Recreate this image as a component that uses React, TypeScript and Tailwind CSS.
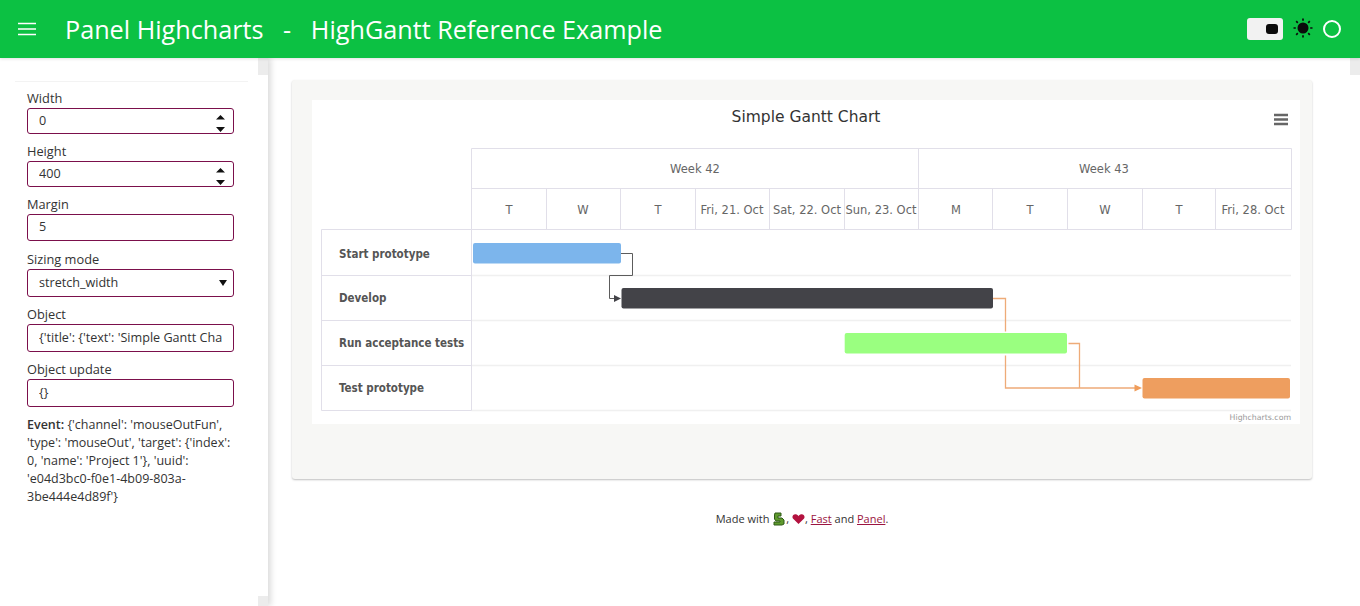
import React from "react";

const UI = "font-['Open_Sans',sans-serif]";
const CF = "'DejaVu Sans', Verdana, sans-serif";
const inputCls =
  "block w-full h-full rounded-[3px] border border-[#7b0f4b] bg-white pl-[11px] pr-[11px] pb-[2px] text-[12.6px] text-[#333] outline-none";

function Spin() {
  return (
    <svg className="absolute right-[7px] top-[5px]" width="12" height="20" viewBox="0 0 12 20">
      <path d="M1 6.5 L5.5 2 L10 6.5 Z M1 14 L10 14 L5.5 19 Z" fill="#111" />
    </svg>
  );
}

function Field({ label, value, h, spin, select }: { label: string; value: string; h: string; spin?: boolean; select?: boolean }) {
  return (
    <div className="flex flex-col">
      <label className="h-[20px] text-[12.8px] leading-[20px] text-[#333]">{label}</label>
      <div className={`relative ${h}`}>
        <input readOnly value={value} className={`${inputCls} ${UI}`} />
        {spin && <Spin />}
        {select && (
          <svg className="absolute right-[7px] top-[11px]" width="8" height="6" viewBox="0 0 8 6">
            <path d="M0 0 L8 0 L4 6 Z" fill="#111" />
          </svg>
        )}
      </div>
    </div>
  );
}

const vLines = [546.5, 620.5, 695.5, 769.5, 844.5, 918.5, 992.5, 1067.5, 1142.5, 1215.5];
const dayLabels: [number, string][] = [
  [509, "T"], [583, "W"], [658, "T"], [732, "Fri, 21. Oct"], [807, "Sat, 22. Oct"], [881, "Sun, 23. Oct"],
  [956, "M"], [1030, "T"], [1105, "W"], [1179, "T"], [1253, "Fri, 28. Oct"],
];
const rows: [number, string][] = [
  [258, "Start prototype"], [302, "Develop"], [347, "Run acceptance tests"], [392, "Test prototype"],
];

function Gantt() {
  const grid = "#e1dfe9";
  const row = "#f0f0f0";
  return (
    <svg width="988" height="324" viewBox="312 100 988 324" className="block bg-white" style={{ fontFamily: CF }}>
      <text x="806" y="122" textAnchor="middle" fontSize="15.5" fill="#333">Simple Gantt Chart</text>
      <path d="M1274 115 H1288 M1274 119.5 H1288 M1274 124 H1288" stroke="#666" strokeWidth="2.4" />

      {/* header grid */}
      <path d="M471.5 148.5 H1291.5 V229.5 H471.5 Z M471.5 188.5 H1291.5 M918.5 148.5 V188.5" fill="none" stroke={grid} />
      {vLines.map((x) => (
        <path key={x} d={`M${x} 188.5 V229.5`} stroke={grid} />
      ))}
      <text x="695" y="173" textAnchor="middle" fontSize="11.5" fill="#666">Week 42</text>
      <text x="1104" y="173" textAnchor="middle" fontSize="11.5" fill="#666">Week 43</text>
      {dayLabels.map(([x, t], i) => (
        <text key={i} x={x} y="214" textAnchor="middle" fontSize="11.5" fill="#666">{t}</text>
      ))}

      {/* rows */}
      {[275.5, 320.5, 365.5, 410.5].map((y) => (
        <path key={y} d={`M471.5 ${y} H1291`} stroke={row} strokeWidth="1.5" />
      ))}
      <path d="M321.5 229.5 H471.5 M321.5 275.5 H471.5 M321.5 320.5 H471.5 M321.5 365.5 H471.5 M321.5 410.5 H471.5 M321.5 229.5 V410.5 M471.5 229.5 V410.5" fill="none" stroke={grid} />
      {rows.map(([y, t]) => (
        <text key={t} x="339" y={y} fontSize="11.5" fontWeight="700" fill="#555" style={{ fontFamily: "'DejaVu Sans Condensed', 'DejaVu Sans', sans-serif", fontStretch: "condensed" }}>{t}</text>
      ))}

      {/* connectors */}
      <path d="M621 253.5 H632.5 V275.5 H609.5 V298.5 H615" fill="none" stroke="#5c5c5c" strokeWidth="1" />
      <path d="M614 295 L621 298.5 L614 302 Z" fill="#434348" />
      <path d="M993 298.5 H1005.5 V388 H1136" fill="none" stroke="#eeab78" strokeWidth="1.3" />
      <path d="M1067 343.5 H1079.5 V388" fill="none" stroke="#eeab78" strokeWidth="1.3" />
      <path d="M1134.5 384.5 L1142 388 L1134.5 391.5 Z" fill="#f09d5b" />

      {/* bars */}
      <rect x="473" y="243" width="148" height="20.5" rx="2" fill="#7cb5ec" />
      <rect x="621.5" y="288" width="371.5" height="20.5" rx="2" fill="#434348" />
      <rect x="843.5" y="331.5" width="225" height="24" fill="#fff" />
      <rect x="844.7" y="333" width="222.3" height="20.5" rx="2" fill="#9aff80" />
      <rect x="1142.5" y="378" width="147.5" height="20.5" rx="2" fill="#ee9e5f" />
      <text x="1291" y="419.5" textAnchor="end" fontSize="7.8" fill="#999">Highcharts.com</text>
    </svg>
  );
}

function Sun() {
  return (
    <svg width="20" height="20" viewBox="0 0 20 20" className="mb-[2px]">
      <circle cx="10" cy="10" r="5.5" fill="#0b0b0b" />
      <path
        d="M10 0.5 V2.8 M10 17.2 V19.5 M0.5 10 H2.8 M17.2 10 H19.5 M3.2 3.2 L4.8 4.8 M15.2 15.2 L16.8 16.8 M16.8 3.2 L15.2 4.8 M4.8 15.2 L3.2 16.8"
        stroke="#0b0b0b"
        strokeWidth="1.7"
      />
    </svg>
  );
}

function Snake() {
  return (
    <svg width="14" height="14" viewBox="0 0 14 14" className="inline-block align-[-3px]">
      <path d="M3 1 H9 V4 H6 V6 H10 L12 8 V12 L10 13 H2 V10 H8 V9 H4 L2.5 7 V3 Z" fill="#5f9a2e" stroke="#2f5a16" strokeWidth="1" />
    </svg>
  );
}

function Heart() {
  return (
    <svg width="13" height="12" viewBox="0 0 14 12" className="inline-block align-[-2px]">
      <path d="M7 11.5 L1 5.5 C-0.5 3 1.5 0.5 4 0.8 C5.5 1 6.5 2 7 3 C7.5 2 8.5 1 10 0.8 C12.5 0.5 14.5 3 13 5.5 Z" fill="#b3123f" />
    </svg>
  );
}

export default function App() {
  return (
    <div className={`relative flex h-[606px] w-[1360px] flex-col overflow-hidden bg-white ${UI}`}>
      <header className="relative z-20 flex h-[58px] shrink-0 items-center bg-[#0cc143] text-white shadow-[0_1px_3px_rgba(0,0,0,0.12)]">
        <svg className="ml-[18px]" width="18" height="14" viewBox="0 0 18 14">
          <path d="M0 1.5 H18 M0 7 H18 M0 12.5 H18" stroke="#fff" strokeWidth="1.6" />
        </svg>
        <h1 className="ml-[29px] whitespace-pre text-[25.2px] font-normal leading-[58px]">Panel Highcharts{"   -   "}HighGantt Reference Example</h1>
        <div className="ml-auto flex items-center">
          <div className="flex h-[22px] w-[36px] items-center justify-end rounded-[3px] bg-[#f2f2f2] pr-[5px]">
            <div className="h-[10px] w-[12px] rounded-[3px] bg-[#0b0b0b]" />
          </div>
          <div className="ml-[10px] flex"><Sun /></div>
          <div className="ml-[10px] mr-[19px] h-[18px] w-[18px] rounded-full border-2 border-white" />
        </div>
      </header>

      <div className="flex min-h-0 flex-1">
        <aside className="relative z-10 w-[268px] shrink-0 bg-white shadow-[3px_0_6px_rgba(0,0,0,0.14)]">
          <div className="absolute right-0 top-0 h-[17px] w-[10px] bg-[#ececec]" />
          <div className="absolute bottom-0 right-0 h-[10px] w-[10px] bg-[#ececec]" />
          <div className="mx-[15px] mt-[23px] h-px w-[233px] bg-[#f3f3f3]" />
          <div className="ml-[27px] mt-[6px] w-[207px]">
            <Field label="Width" value="0" h="h-[26px]" spin />
            <div className="mt-[7px]"><Field label="Height" value="400" h="h-[26px]" spin /></div>
            <div className="mt-[7px]"><Field label="Margin" value="5" h="h-[27px]" /></div>
            <div className="mt-[8px]"><Field label="Sizing mode" value="stretch_width" h="h-[28px]" select /></div>
            <div className="mt-[7px]"><Field label="Object" value="{'title': {'text': 'Simple Gantt Chart'}, 'series': []}" h="h-[28px]" /></div>
            <div className="mt-[7px]"><Field label="Object update" value="{}" h="h-[28px]" /></div>
            <p className="mt-[9px] text-[12.5px] leading-[18px] text-[#333]">
              <b className="font-semibold">Event:</b> {"{'channel': 'mouseOutFun', 'type': 'mouseOut', 'target': {'index': 0, 'name': 'Project 1'}, 'uuid': 'e04d3bc0-f0e1-4b09-803a-3be444e4d89f'}"}
            </p>
          </div>
        </aside>

        <main className="relative min-w-0 flex-1">
          <div className="absolute right-0 top-0 h-[17px] w-[10px] bg-[#ececec]" />
          <section className="ml-[24px] mt-[22px] h-[399px] w-[1020px] rounded-[3px] bg-[#f7f7f5] pl-[20px] pt-[20px] shadow-[0_1px_2px_rgba(0,0,0,0.25)]">
            <Gantt />
          </section>
          <footer className="ml-[24px] mt-[31px] w-[1020px] text-center text-[11px] leading-[18px] text-[#333]">
            Made with <Snake />, <Heart />, <a className="text-[#9b1440] underline">Fast</a> and <a className="text-[#9b1440] underline">Panel</a>.
          </footer>
        </main>
      </div>
    </div>
  );
}
